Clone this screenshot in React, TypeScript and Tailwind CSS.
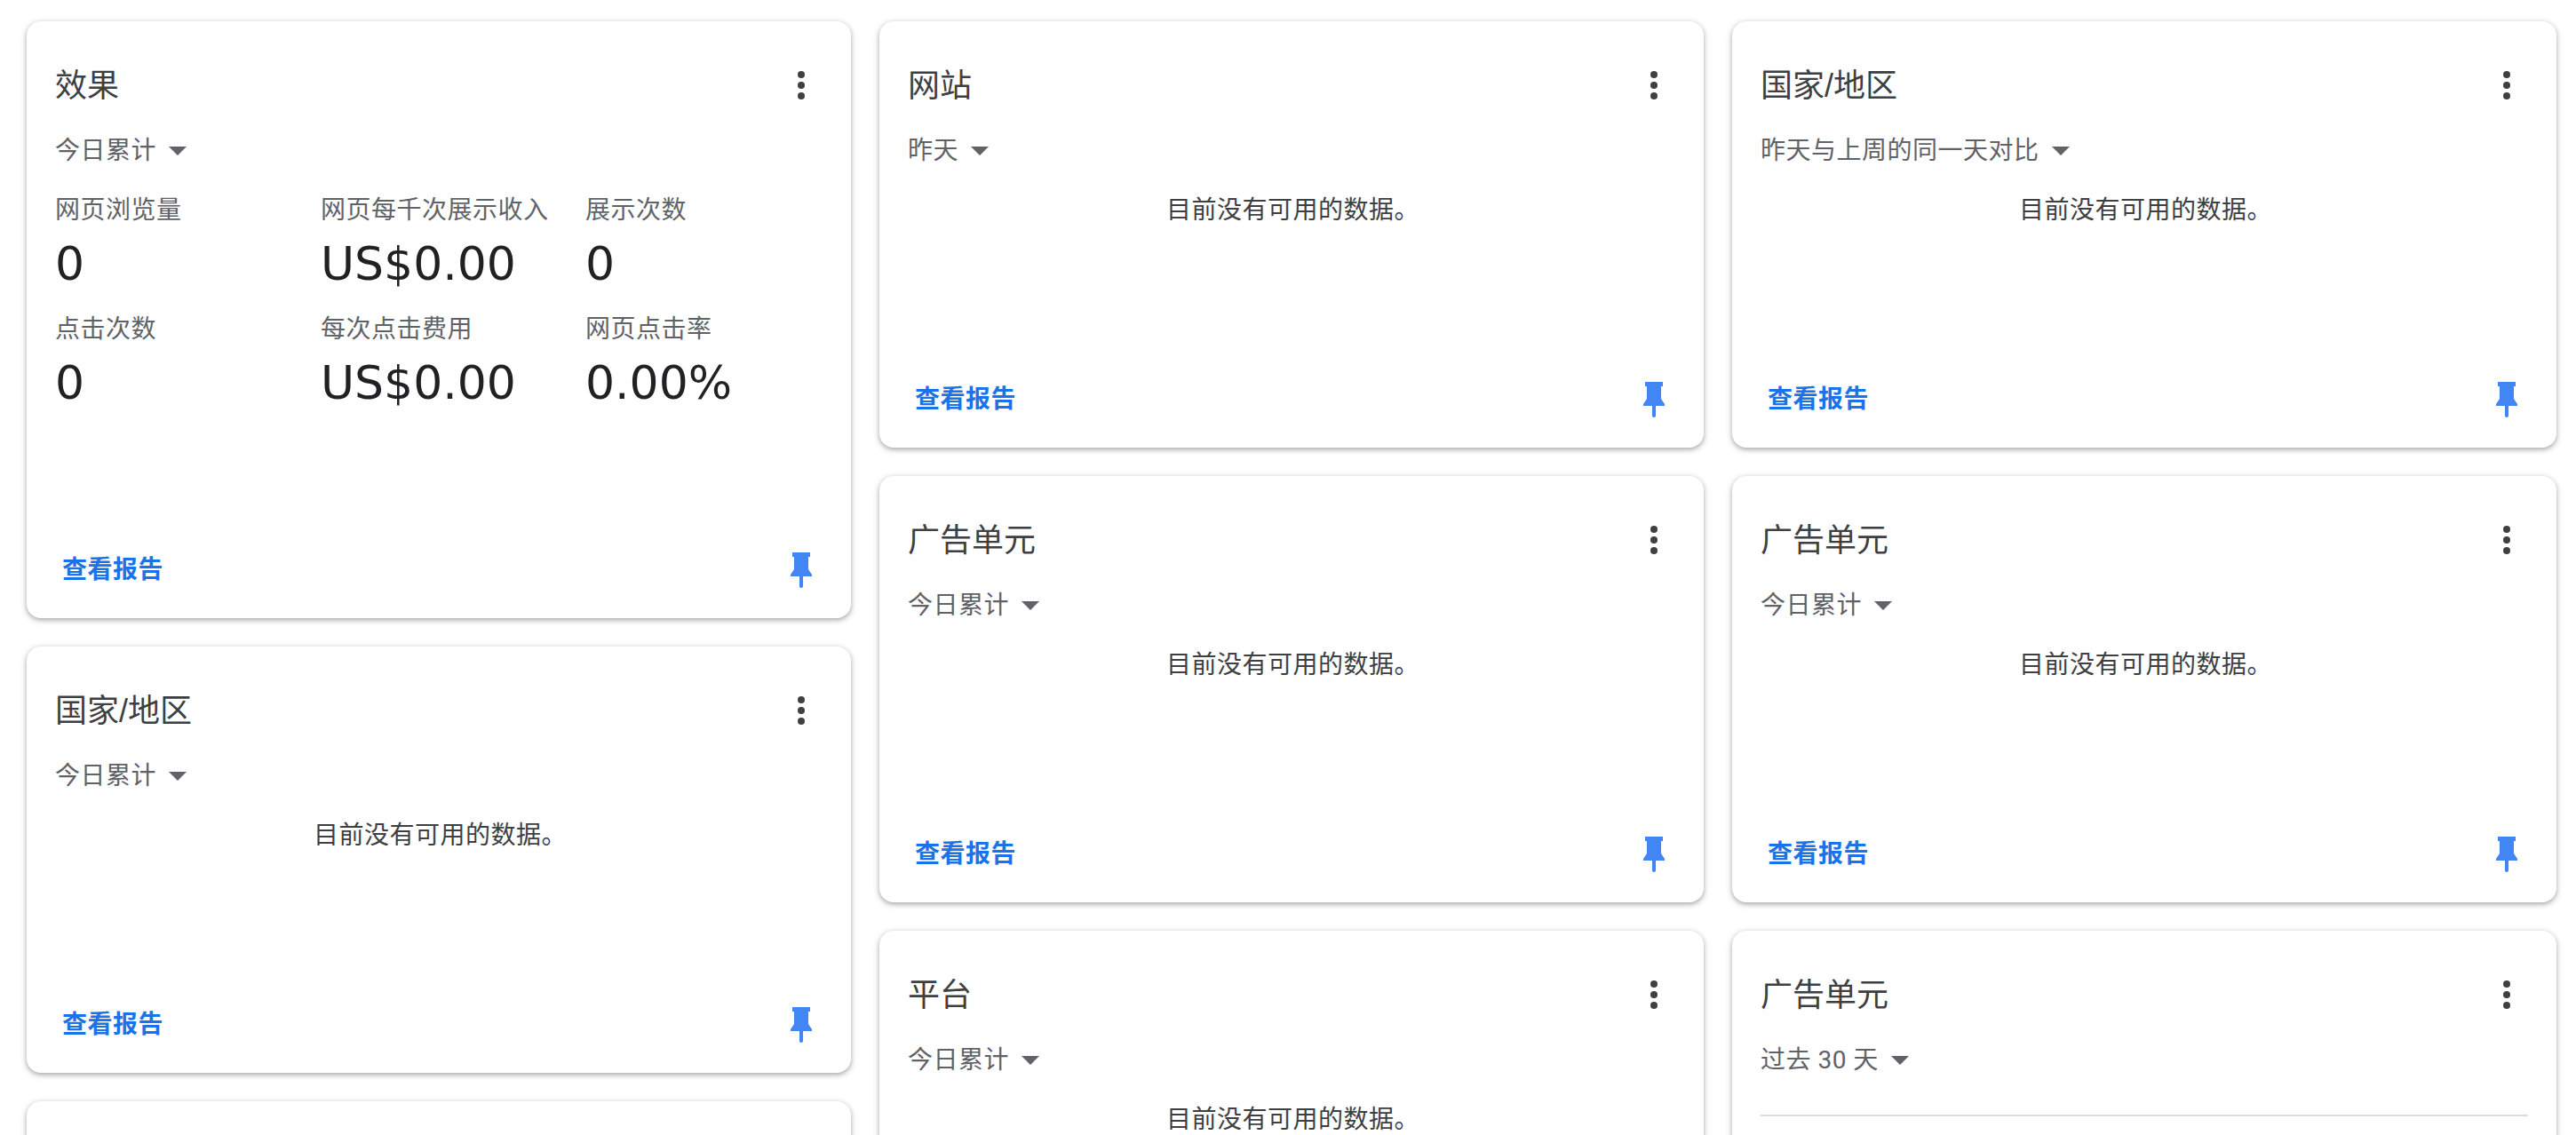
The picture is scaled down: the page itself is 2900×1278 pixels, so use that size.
const metrics = [
  { label: '网页浏览量', value: '0' },
  { label: '网页每千次展示收入', value: 'US$0.00' },
  { label: '展示次数', value: '0' },
  { label: '点击次数', value: '0' },
  { label: '每次点击费用', value: 'US$0.00' },
  { label: '网页点击率', value: '0.00%' },
];

function MoreIcon() {
  return (
    <svg width="8" height="32" viewBox="0 0 8 32" className="fill-[#3c4043]">
      <circle cx="4" cy="4" r="4" />
      <circle cx="4" cy="16" r="4" />
      <circle cx="4" cy="28" r="4" />
    </svg>
  );
}

function PinIcon() {
  return (
    <svg width="24" height="40" viewBox="0 0 24 40" className="fill-[#4285f4]">
      <path d="M2 0h20v5h-2v14l4 6v2H14v11a2 2 0 0 1-4 0V27H0v-2l4-6V5H2z" />
    </svg>
  );
}

function Caret() {
  return (
    <svg width="20" height="10" viewBox="0 0 20 10" className="fill-[#5f6368]">
      <path d="M0 0h20L10 10z" />
    </svg>
  );
}

function Card({ title, range, children, tall, cut }: { title: string; range: string; children?: React.ReactNode; tall?: boolean; cut?: boolean }) {
  return (
    <section className={`flex shrink-0 flex-col rounded-[16px] bg-white px-[32px] pt-[48px] pb-[32px] shadow-[0_2px_4px_rgba(60,64,67,0.3),0_2px_6px_2px_rgba(60,64,67,0.15)] ${tall ? 'h-[672px]' : 'h-[480px]'}`}>
      <div className="flex h-[48px] items-center justify-between">
        <h2 className="pt-[2px] font-['Liberation_Sans','Noto_Sans_CJK_SC',sans-serif] text-[36px] leading-[48px] font-normal text-[#3c4043]">{title}</h2>
        <div className="flex w-[48px] justify-center"><MoreIcon /></div>
      </div>
      <div className="mt-[30px] flex h-[40px] items-center gap-[14px] text-[28px] leading-[40px] tracking-[0.5px] text-[#5f6368]">
        <span>{range}</span>
        <Caret />
      </div>
      {children ?? <p className="mt-[27px] pl-[3px] text-center text-[28px] leading-[40px] tracking-[0.5px] text-[#3c4043]">目前没有可用的数据。</p>}
      {!cut && (
        <div className="mt-auto flex h-[44px] items-center justify-between pl-[8px]">
          <a className="text-[28px] leading-[40px] font-bold tracking-[0.5px] text-[#1a73e8]">查看报告</a>
          <div className="flex w-[48px] justify-center"><PinIcon /></div>
        </div>
      )}
    </section>
  );
}

export default function App() {
  return (
    <main className="flex h-screen items-start gap-[32px] overflow-hidden bg-white pt-[24px] pl-[30px] font-['Roboto','Noto_Sans_CJK_SC',sans-serif]">
      <div className="flex w-[928px] flex-col gap-[32px]">
        <Card title="效果" range="今日累计" tall>
          <div className="mt-[27px] grid grid-cols-[299px_298px_267px] gap-y-[22px]">
            {metrics.map((m) => (
              <div key={m.label}>
                <div className="text-[28px] leading-[40px] tracking-[0.5px] text-[#5f6368]">{m.label}</div>
                <div className="mt-[8px] font-['DejaVu_Sans','Inter',sans-serif] text-[52px] leading-[64px] text-[#202124]">{m.value}</div>
              </div>
            ))}
          </div>
        </Card>
        <Card title="国家/地区" range="今日累计" />
        <div className="h-[480px] shrink-0 rounded-[16px] bg-white shadow-[0_2px_4px_rgba(60,64,67,0.3),0_2px_6px_2px_rgba(60,64,67,0.15)]" />
      </div>
      <div className="flex w-[928px] flex-col gap-[32px]">
        <Card title="网站" range="昨天" />
        <Card title="广告单元" range="今日累计" />
        <Card title="平台" range="今日累计" cut />
      </div>
      <div className="flex w-[928px] flex-col gap-[32px]">
        <Card title="国家/地区" range="昨天与上周的同一天对比" />
        <Card title="广告单元" range="今日累计" />
        <Card title="广告单元" range="过去 30 天" cut>
          <div className="mt-[41px] h-[2px] bg-[#dadce0]" />
        </Card>
      </div>
    </main>
  );
}
